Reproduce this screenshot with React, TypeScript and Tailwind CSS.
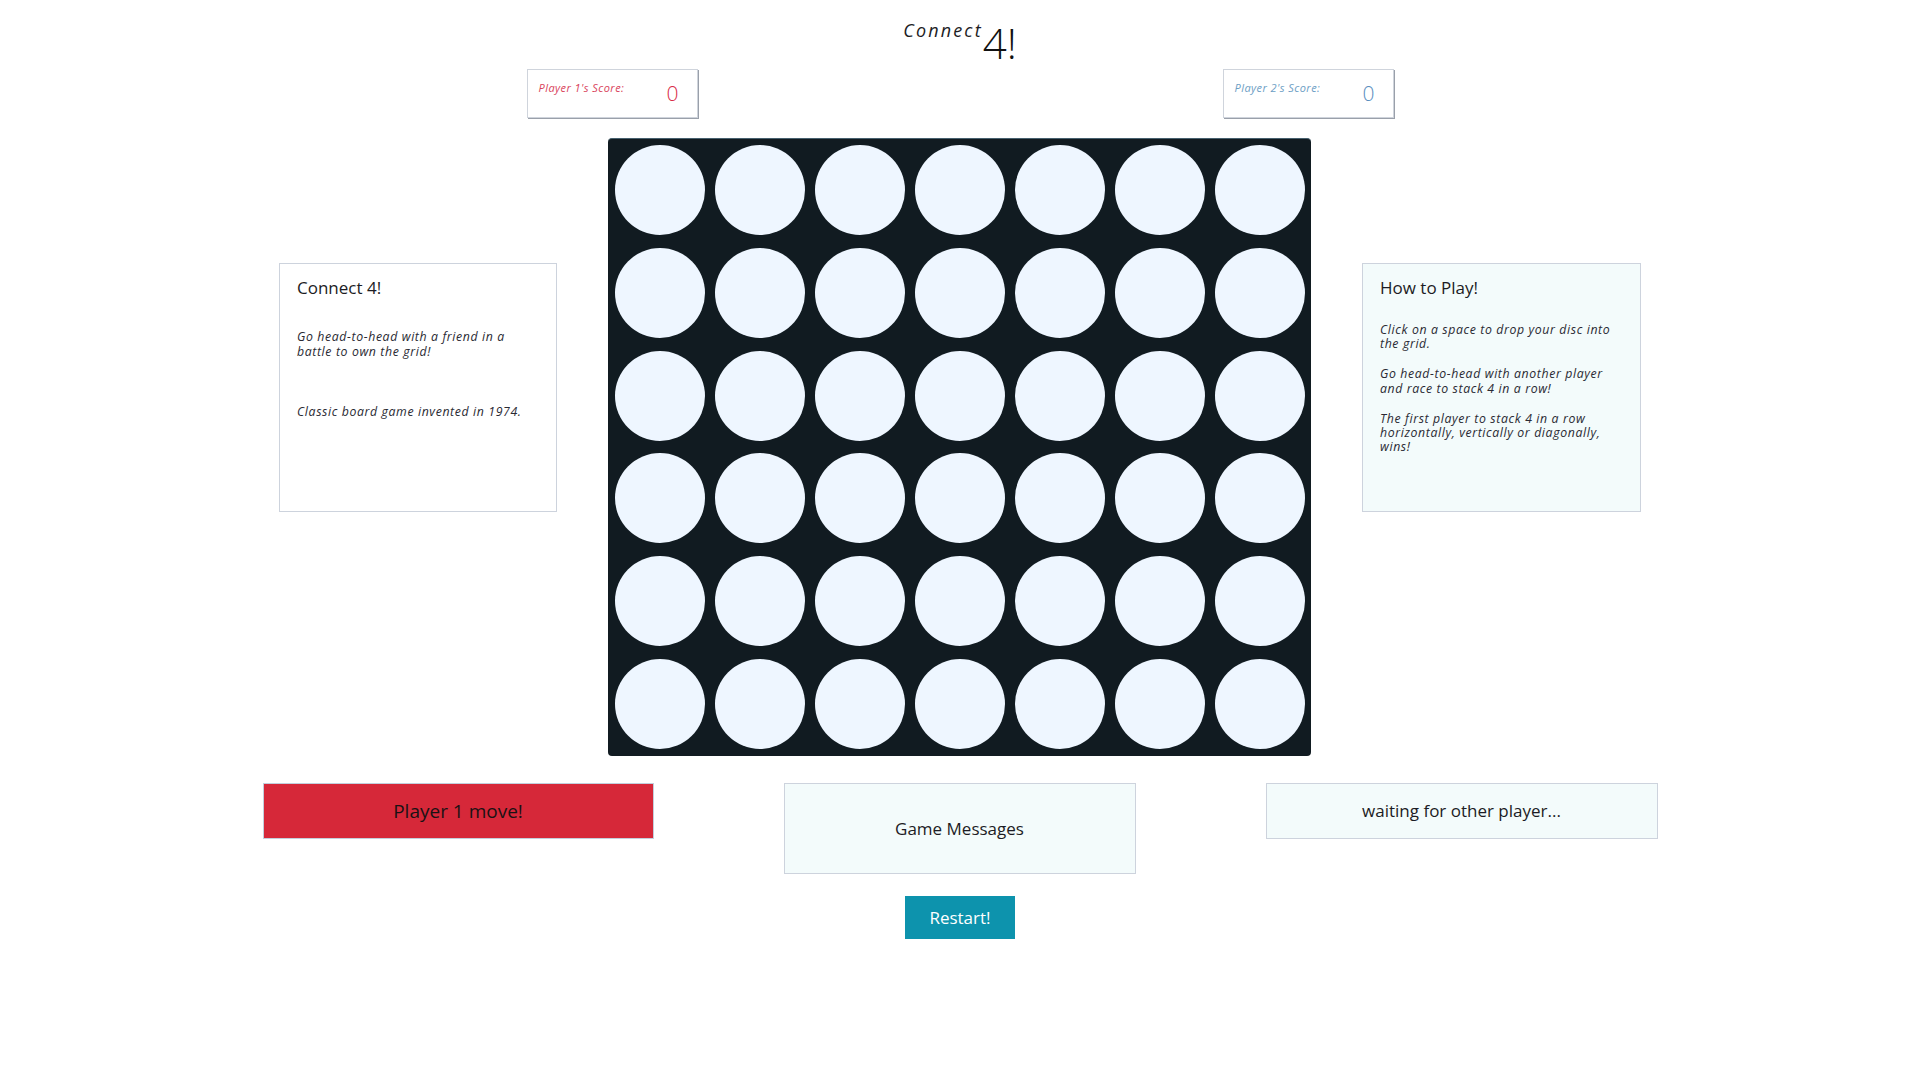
import React from "react";

const font = { fontFamily: '"Open Sans", "Noto Sans", sans-serif' };

function ScoreBox({ label, labelColor, valueColor }: { label: string; labelColor: string; valueColor: string }) {
  return (
    <div className="w-[171px] h-[49px] bg-white border border-[#cfd4dc] shadow-[1px_1px_0_#9aa0aa] flex items-start justify-between pl-[11px] pr-[18px] pt-[10px]">
      <span className={`text-[11px] leading-[16px] italic tracking-[0.04em] ${labelColor}`}>{label}</span>
      <span className={`text-[21px] leading-none font-light mt-[3px] ${valueColor}`}>0</span>
    </div>
  );
}

export default function App() {
  const rows = Array.from({ length: 6 });
  const cols = Array.from({ length: 7 });
  const body = "text-[12.3px] italic tracking-[0.05em] text-[#2a2a33]";
  return (
    <div className="min-h-screen w-full bg-white text-[#1c1c24]" style={font}>
      <div className="flex justify-center items-start pt-[22px] gap-0">
        <span className="text-[18px] leading-none italic tracking-[0.12em] text-[#1c1c24] -mt-[1px]">Connect</span>
        <span className="text-[42px] leading-none font-light text-[#111]">4!</span>
      </div>

      <div className="mx-auto mt-[5px] w-[867px] flex justify-between">
        <ScoreBox label="Player 1's Score:" labelColor="text-[#d9435b]" valueColor="text-[#d92c48]" />
        <ScoreBox label="Player 2's Score:" labelColor="text-[#6c9ec4]" valueColor="text-[#5b8fbf]" />
      </div>

      <div className="mt-[20px] flex justify-center items-start gap-[51px]">
        <div className="mt-[125px] w-[278px] h-[249px] bg-white border border-[#cdd3dd] pl-[17px] pr-[10px] pt-[12px]">
          <div className="text-[17px] leading-[24px] text-[#1c1c24]">Connect 4!</div>
          <p className={`mt-[29px] leading-[15px] ${body}`}>
            Go head-to-head with a friend in a<br />battle to own the grid!
          </p>
          <p className={`mt-[45px] leading-[15px] ${body}`}>Classic board game invented in 1974.</p>
        </div>

        <div className="w-[703px] h-[618px] bg-[#111b21] rounded-[4px] border-t border-[#46606e] pl-[2px]">
          <div className="grid grid-cols-[repeat(7,100px)] grid-rows-[repeat(6,102.7px)]">
            {rows.map((_, r) =>
              cols.map((_, c) => (
                <div key={`${r}-${c}`} className="flex items-center justify-center">
                  <div className="w-[90px] h-[90px] rounded-full bg-[#eef6ff]" />
                </div>
              ))
            )}
          </div>
        </div>

        <div className="mt-[125px] w-[279px] h-[249px] bg-[#f3fbfb] border border-[#cdd3dd] pl-[17px] pr-[6px] pt-[12px]">
          <div className="text-[17px] leading-[24px] text-[#1c1c24]">How to Play!</div>
          <p className={`mt-[23px] leading-[14.4px] ${body}`}>
            Click on a space to drop your disc into<br />the grid.
          </p>
          <p className={`mt-[15.5px] leading-[14.4px] ${body}`}>
            Go head-to-head with another player<br />and race to stack 4 in a row!
          </p>
          <p className={`mt-[15.5px] leading-[14.4px] ${body}`}>
            The first player to stack 4 in a row<br />horizontally, vertically or diagonally,<br />wins!
          </p>
        </div>
      </div>

      <div className="mt-[27px] flex justify-center items-start gap-[130px]">
        <div className="w-[391px] h-[56px] bg-[#d62839] border border-[#c3cfdc] flex items-center justify-center">
          <span className="text-[19px] text-[#1a1214]">Player 1 move!</span>
        </div>
        <div className="w-[352px] h-[91px] bg-[#f3fbfb] border border-[#cdd3dd] flex items-center justify-center">
          <span className="text-[17px] text-[#1c1c24]">Game Messages</span>
        </div>
        <div className="w-[392px] h-[56px] bg-[#f3fbfb] border border-[#cdd3dd] flex items-center justify-center">
          <span className="text-[17px] text-[#1c1c24]">waiting for other player...</span>
        </div>
      </div>

      <div className="mt-[22px] flex justify-center">
        <button className="w-[110px] h-[43px] bg-[#0d93ad] text-white text-[17px]">Restart!</button>
      </div>
    </div>
  );
}
